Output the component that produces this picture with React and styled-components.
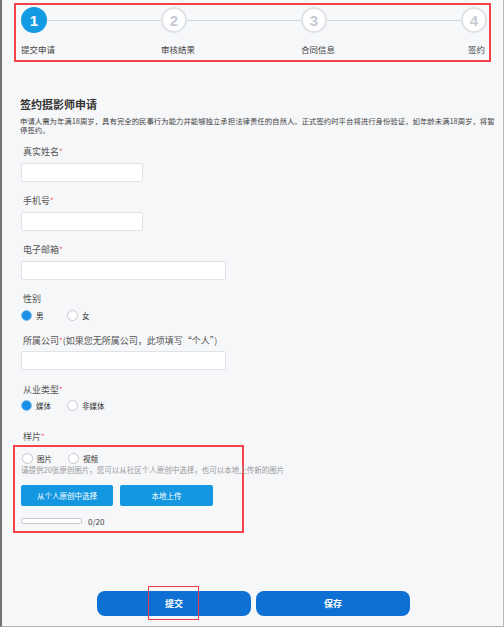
import React from 'react';
import styled, { createGlobalStyle } from 'styled-components';

const GlobalStyle = createGlobalStyle`
  html, body {
    margin: 0;
    padding: 0;
    background: #f6f7f9;
  }
  body {
    font-family: "Noto Sans CJK SC", "Noto Sans", sans-serif;
  }
  * {
    box-sizing: border-box;
  }
`;

const Page = styled.div`
  width: 504px;
  height: 627px;
  background: #f6f7f9;
  border-left: 2px solid #747474;
  border-right: 1px solid #b8b8b8;
  border-bottom: 1px solid #b0b0b0;
  padding-top: 3px;
  display: flex;
  flex-direction: column;
  overflow: hidden;
`;

const StepsBox = styled.div`
  margin-left: 12px;
  width: 477px;
  height: 59px;
  border: 2px solid #f2434b;
  padding: 2px 0 0 5px;
  display: grid;
  grid-template-columns: 140px 140px 160px 26px;
`;

const Step = styled.div`
  display: flex;
  flex-direction: column;
`;

const StepTop = styled.div`
  display: flex;
  align-items: center;
  height: 26px;
`;

const Circle = styled.div`
  width: 26px;
  height: 26px;
  flex: none;
  border-radius: 50%;
  display: flex;
  align-items: center;
  justify-content: center;
  font-family: "Liberation Sans", Arial, sans-serif;
  font-weight: bold;
  font-size: 15px;
  background: ${(p) => (p.$active ? '#129ae3' : '#fff')};
  color: ${(p) => (p.$active ? '#fff' : '#c6cbd3')};
  border: ${(p) => (p.$active ? 'none' : '2px solid #dfe2e7')};
`;

const StepLine = styled.div`
  flex: 1;
  height: 1px;
  background: #d4d8df;
`;

const StepLabel = styled.div`
  margin-top: 11px;
  font-size: 8.5px;
  line-height: 10px;
  color: #444;
  white-space: nowrap;
  text-align: ${(p) => (p.$right ? 'right' : 'left')};
  padding-right: ${(p) => (p.$right ? '2px' : '0')};
`;

const Form = styled.div`
  margin-top: 35px;
  padding-left: 18px;
  display: flex;
  flex-direction: column;
  align-items: flex-start;
`;

const Title = styled.div`
  font-size: 11px;
  line-height: 14px;
  font-weight: bold;
  color: #333;
`;

const Desc = styled.div`
  margin-top: 5px;
  width: 478px;
  font-size: 7.4px;
  line-height: 9px;
  color: #444;
`;

const Label = styled.div`
  margin-top: ${(p) => p.$mt}px;
  padding-left: 3px;
  font-size: 9px;
  line-height: 12px;
  color: #555;
  white-space: nowrap;
`;

const Star = styled.span`
  color: #f4505a;
  font-size: 8px;
  vertical-align: top;
`;

const Input = styled.div`
  margin-top: ${(p) => p.$mt || 5}px;
  margin-left: 1px;
  width: ${(p) => p.$w}px;
  height: 19px;
  background: #fff;
  border: 1px solid #dfe3e8;
  border-radius: 2px;
`;

const RadioRow = styled.div`
  display: flex;
  align-items: center;
  height: 12px;
  margin-top: ${(p) => p.$mt}px;
  margin-left: 1px;
`;

const Option = styled.div`
  display: flex;
  align-items: center;
  gap: 4px;
  width: 46px;
  font-size: 7.5px;
  color: #333;
  white-space: nowrap;
`;

const RadioDot = styled.span`
  width: 11px;
  height: 11px;
  flex: none;
  border-radius: 50%;
  background: ${(p) => (p.$checked ? '#1a8fe6' : '#fff')};
  border: 1px solid ${(p) => (p.$checked ? '#86c4f2' : '#c5c9d0')};
`;

const SampleBox = styled.div`
  margin-top: 2px;
  margin-left: -7px;
  width: 231px;
  height: 88px;
  border: 2px solid #f2434b;
  padding: 5px 0 0 6px;
  display: flex;
  flex-direction: column;
  align-items: flex-start;
`;

const Hint = styled.div`
  margin-top: 2px;
  font-size: 7.5px;
  line-height: 8px;
  color: #999;
  white-space: nowrap;
`;

const UploadRow = styled.div`
  margin-top: 11px;
  display: flex;
  gap: 7px;
`;

const UploadButton = styled.div`
  width: ${(p) => p.$w}px;
  height: 21px;
  background: #1297e0;
  color: #fff;
  border-radius: 2px;
  font-size: 7.5px;
  display: flex;
  align-items: center;
  justify-content: center;
`;

const ProgressRow = styled.div`
  margin-top: 12px;
  display: flex;
  align-items: center;
  gap: 6px;
  height: 6px;
`;

const ProgressBar = styled.div`
  width: 61px;
  height: 6px;
  background: #fff;
  border: 1px solid #c8ccd2;
  border-radius: 2px;
`;

const Count = styled.span`
  font-size: 8px;
  color: #444;
`;

const Actions = styled.div`
  margin-top: 58px;
  display: flex;
  justify-content: center;
  gap: 5px;
  padding-left: 2px;
`;

const ActionButton = styled.div`
  position: relative;
  width: 154px;
  height: 25px;
  border-radius: 8px;
  background: #0d70d2;
  color: #fff;
  font-size: 9px;
  font-weight: bold;
  display: flex;
  align-items: center;
  justify-content: center;
`;

const Highlight = styled.div`
  position: absolute;
  left: 51px;
  top: -5px;
  width: 51px;
  height: 34px;
  border: 1.5px solid #ee3a44;
`;

const steps = ['提交申请', '审核结果', '合同信息', '签约'];

const Radio = ({ checked, children }) => (
  <Option>
    <RadioDot $checked={checked} />
    {children}
  </Option>
);

const App = () => (
  <>
    <GlobalStyle />
    <Page>
      <StepsBox>
        {steps.map((s, i) => (
          <Step key={s}>
            <StepTop>
              <Circle $active={i === 0}>{i + 1}</Circle>
              {i < steps.length - 1 && <StepLine />}
            </StepTop>
            <StepLabel $right={i === steps.length - 1}>{s}</StepLabel>
          </Step>
        ))}
      </StepsBox>

      <Form>
        <Title>签约摄影师申请</Title>
        <Desc>
          申请人需为年满18周岁，具有完全的民事行为能力并能够独立承担法律责任的自然人。正式签约时平台将进行身份验证，如年龄未满18周岁，将暂停签约。
        </Desc>

        <Label $mt={12}>真实姓名<Star>*</Star></Label>
        <Input $w={122} />

        <Label $mt={13}>手机号<Star>*</Star></Label>
        <Input $w={122} />

        <Label $mt={13}>电子邮箱<Star>*</Star></Label>
        <Input $w={205} />

        <Label $mt={13}>性别</Label>
        <RadioRow $mt={4}>
          <Radio checked>男</Radio>
          <Radio>女</Radio>
        </RadioRow>

        <Label $mt={14}>所属公司<Star>*</Star>(如果您无所属公司，此项填写“个人”)</Label>
        <Input $w={205} $mt={4} />

        <Label $mt={14}>从业类型<Star>*</Star></Label>
        <RadioRow $mt={3}>
          <Radio checked>媒体</Radio>
          <Radio>非媒体</Radio>
        </RadioRow>

        <Label $mt={20}>样片<Star>*</Star></Label>
        <SampleBox>
          <RadioRow $mt={0}>
            <Radio>图片</Radio>
            <Radio>视频</Radio>
          </RadioRow>
          <Hint>请提供20张原创图片，您可以从社区个人原创中选择，也可以本地上传新的图片</Hint>
          <UploadRow>
            <UploadButton $w={92}>从个人原创中选择</UploadButton>
            <UploadButton $w={93}>本地上传</UploadButton>
          </UploadRow>
          <ProgressRow>
            <ProgressBar />
            <Count>0/20</Count>
          </ProgressRow>
        </SampleBox>
      </Form>

      <Actions>
        <ActionButton>
          提交
          <Highlight />
        </ActionButton>
        <ActionButton>保存</ActionButton>
      </Actions>
    </Page>
  </>
);

export default App;
